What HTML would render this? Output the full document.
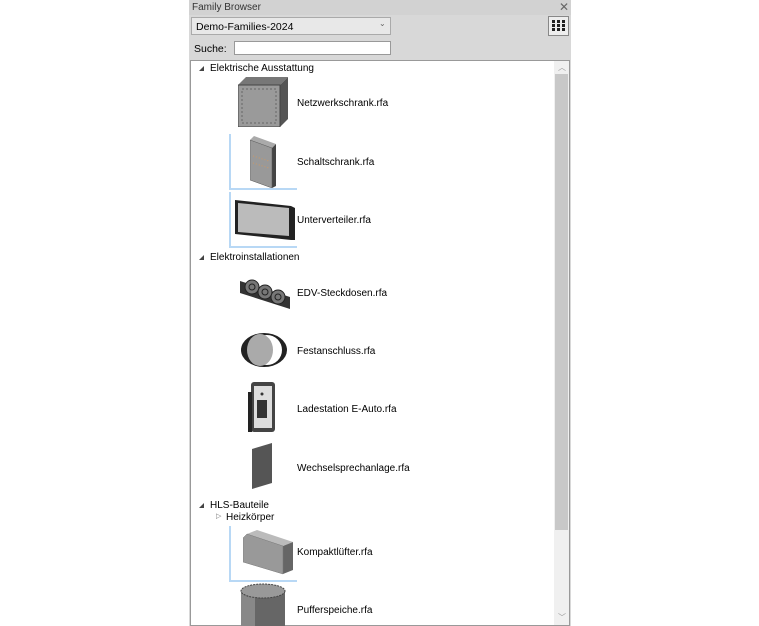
<!DOCTYPE html>
<html><head><meta charset="utf-8"><style>
*{margin:0;padding:0;box-sizing:border-box}
body{width:759px;height:626px;background:#fff;font-family:"Liberation Sans",sans-serif;font-size:10px;color:#000;position:relative;overflow:hidden}
.p{position:absolute;left:189px;top:0;width:382px;height:626px;background:#d8d8d8}
.a{position:absolute}
.lbl{position:absolute;left:297px;font-size:10px;white-space:nowrap}
.hd{position:absolute;left:210px;font-size:10px}
.tri{position:absolute;left:199px;width:0;height:0;border-left:5px solid transparent;border-bottom:5px solid #444}
.sel{position:absolute;left:229px;width:68px;height:56px;border-left:2px solid #b8d8f5;border-bottom:2px solid #b8d8f5}
</style></head><body>
<div class="p"></div>
<div class="a" style="left:189px;top:0;width:382px;height:15px;background:#d2d2d2"></div>
<div class="a" style="left:192px;top:2px;font-size:10px;color:#333">Family Browser</div>
<div class="a" style="left:559px;top:0px;font-size:12px;color:#666">✕</div>
<div class="a" style="left:191px;top:17px;width:200px;height:18px;background:#e8e8e8;border:1px solid #aaa"></div>
<div class="a" style="left:196px;top:21px;font-size:10.5px">Demo-Families-2024</div>
<div class="a" style="left:379px;top:19px;font-size:8px;color:#666">⌄</div>
<div class="a" style="left:548px;top:16px;width:21px;height:20px;background:#eee;border:1px solid #888"></div>
<svg class="a" style="left:552px;top:20px" width="13" height="12"><g fill="#222"><rect x="0" y="0" width="3" height="3"/><rect x="5" y="0" width="3" height="3"/><rect x="10" y="0" width="3" height="3"/><rect x="0" y="4" width="3" height="3"/><rect x="5" y="4" width="3" height="3"/><rect x="10" y="4" width="3" height="3"/><rect x="0" y="8" width="3" height="3"/><rect x="5" y="8" width="3" height="3"/><rect x="10" y="8" width="3" height="3"/></g></svg>
<div class="a" style="left:194px;top:43px;font-size:10.5px">Suche:</div>
<div class="a" style="left:234px;top:41px;width:157px;height:14px;background:#fff;border:1px solid #999"></div>
<div class="a" style="left:190px;top:60px;width:380px;height:566px;background:#fff;border:1px solid #999"></div>
<div class="a" style="left:554px;top:61px;width:15px;height:564px;background:#f0f0f0"></div>
<div class="a" style="left:555px;top:74px;width:13px;height:456px;background:#c8c8c8"></div>
<div class="a" style="left:558px;top:62px;font-size:8px;color:#999">︿</div>
<div class="a" style="left:558px;top:612px;font-size:8px;color:#999">﹀</div>

<div class="tri" style="top:66px"></div><div class="hd" style="top:63px">Elektrische Ausstattung</div>
<svg class="a" style="left:238px;top:77px" width="52" height="50"><polygon points="0,8 8,0 50,0 42,8" fill="#777"/><polygon points="42,8 50,0 50,42 42,50" fill="#555"/><rect x="0" y="8" width="42" height="42" fill="#9a9a9a" stroke="#444"/><rect x="4" y="12" width="34" height="34" fill="none" stroke="#666" stroke-dasharray="2,2"/></svg>
<div class="lbl" style="top:98px">Netzwerkschrank.rfa</div>

<div class="sel" style="top:134px"></div>
<svg class="a" style="left:250px;top:136px" width="28" height="52"><polygon points="0,4 4,0 26,8 22,12" fill="#aaa"/><polygon points="22,12 26,8 26,50 22,52" fill="#444"/><polygon points="0,4 22,12 22,52 0,44" fill="#999" stroke="#555" stroke-width=".5"/><line x1="3" y1="20" x2="19" y2="25" stroke="#c96" stroke-dasharray="1,2"/><line x1="3" y1="27" x2="19" y2="32" stroke="#c96" stroke-dasharray="1,2"/></svg>
<div class="lbl" style="top:157px">Schaltschrank.rfa</div>

<div class="sel" style="top:192px"></div>
<svg class="a" style="left:235px;top:200px" width="60" height="40"><polygon points="0,0 56,6 60,8 60,40 56,40 0,34" fill="#222"/><polygon points="3,3 54,8 54,36 3,32" fill="#bbb"/></svg>
<div class="lbl" style="top:215px">Unterverteiler.rfa</div>

<div class="tri" style="top:255px"></div><div class="hd" style="top:252px">Elektroinstallationen</div>
<svg class="a" style="left:240px;top:275px" width="52" height="36"><polygon points="0,6 50,22 50,34 0,18" fill="#333"/><circle cx="12" cy="12" r="7" fill="#777" stroke="#222"/><circle cx="25" cy="17" r="7" fill="#777" stroke="#222"/><circle cx="38" cy="22" r="7" fill="#777" stroke="#222"/><circle cx="12" cy="12" r="3" fill="none" stroke="#222"/><circle cx="25" cy="17" r="3" fill="none" stroke="#222"/><circle cx="38" cy="22" r="3" fill="none" stroke="#222"/></svg>
<div class="lbl" style="top:288px">EDV-Steckdosen.rfa</div>

<svg class="a" style="left:240px;top:332px" width="48" height="36"><ellipse cx="24" cy="18" rx="23" ry="17" fill="#222"/><ellipse cx="27" cy="18" rx="15" ry="15" fill="#fff"/><ellipse cx="20" cy="18" rx="13" ry="16" fill="#aaa"/></svg>
<div class="lbl" style="top:346px">Festanschluss.rfa</div>

<svg class="a" style="left:247px;top:382px" width="30" height="52"><rect x="4" y="0" width="24" height="50" rx="3" fill="#444"/><rect x="7" y="4" width="18" height="42" fill="#ddd"/><rect x="10" y="18" width="10" height="18" fill="#333"/><circle cx="15" cy="12" r="1.5" fill="#333"/><rect x="1" y="10" width="4" height="40" fill="#222"/></svg>
<div class="lbl" style="top:404px">Ladestation E-Auto.rfa</div>

<svg class="a" style="left:252px;top:443px" width="22" height="46"><polygon points="0,6 20,0 20,40 0,46" fill="#555"/></svg>
<div class="lbl" style="top:463px">Wechselsprechanlage.rfa</div>

<div class="tri" style="top:503px"></div><div class="hd" style="top:500px">HLS-Bauteile</div>
<div class="a" style="left:216px;top:512px;font-size:7px;color:#777">▷</div>
<div class="a" style="left:226px;top:512px;font-size:10px">Heizkörper</div>

<div class="sel" style="top:526px"></div>
<svg class="a" style="left:243px;top:530px" width="52" height="45"><polygon points="4,4 14,0 50,12 40,16" fill="#bbb"/><polygon points="40,16 50,12 50,40 40,44" fill="#666"/><polygon points="0,8 4,4 40,16 40,44 0,32" fill="#999" stroke="#777" stroke-width=".5"/></svg>
<div class="lbl" style="top:547px">Kompaktlüfter.rfa</div>

<svg class="a" style="left:240px;top:583px" width="46" height="43"><rect x="1" y="8" width="44" height="36" fill="#666"/><rect x="1" y="8" width="14" height="36" fill="#888"/><ellipse cx="23" cy="8" rx="22" ry="7" fill="#999" stroke="#444" stroke-dasharray="2,1"/></svg>
<div class="lbl" style="top:605px">Pufferspeiche.rfa</div>
</body></html>
